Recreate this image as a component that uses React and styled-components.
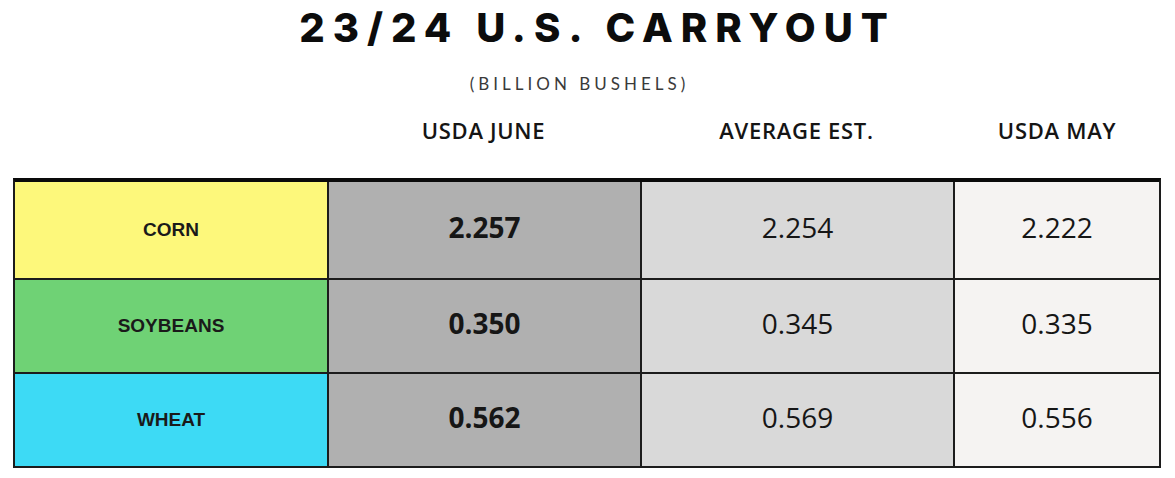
import { Fragment } from 'react';
import styled, { createGlobalStyle } from 'styled-components';

const GlobalStyle = createGlobalStyle`
  body {
    margin: 0;
    background: #ffffff;
    font-family: "Open Sans", "Liberation Sans", sans-serif;
  }
`;

const Page = styled.div`
  width: 1175px;
  height: 478px;
  padding: 0 14px 0 13px;
  box-sizing: border-box;
  overflow: hidden;
`;

const Title = styled.h1`
  margin: 8px 0 0;
  text-align: center;
  font-family: Inter, "Liberation Sans", sans-serif;
  font-weight: 800;
  font-size: 40px;
  line-height: 40px;
  letter-spacing: 8px;
  padding-left: 21px;
  color: #0c0c0c;
`;

const Subtitle = styled.div`
  margin-top: 27px;
  text-align: center;
  font-family: Lato, "Liberation Sans", sans-serif;
  font-size: 17px;
  line-height: 18px;
  letter-spacing: 4px;
  padding-right: 15px;
  color: #3a3a3a;
`;

const cols = '314px 313px 313px 1fr';

const HeaderRow = styled.div`
  display: grid;
  grid-template-columns: ${cols};
  width: 1148px;
  margin-top: 17px;
  height: 40px;
  align-items: center;
`;

const HeaderCell = styled.div`
  text-align: center;
  font-family: "Open Sans", "Liberation Sans", sans-serif;
  font-weight: 600;
  font-size: 22px;
  letter-spacing: 0.7px;
  color: #151515;
`;

const Table = styled.div`
  margin-top: 28px;
  border: 2px solid #1c1c1c;
  border-top: 4px solid #0a0a0a;
  display: grid;
  grid-template-columns: 312px 313px 313px 1fr;
  grid-template-rows: 96px 94px 94px;
  box-sizing: border-box;
  width: 1148px;
`;

const Cell = styled.div`
  display: flex;
  align-items: center;
  justify-content: center;
  box-sizing: border-box;
  background: ${(p) => p.$bg};
  border-left: ${(p) => (p.$first ? 'none' : '2px solid #1c1c1c')};
  border-top: ${(p) => (p.$top ? 'none' : '2px solid #1c1c1c')};
  color: #141414;
`;

const Label = styled.span`
  font-family: "Liberation Sans", Arial, sans-serif;
  font-weight: 700;
  font-size: 19px;
  color: #1a1a1a;
`;

const Value = styled.span`
  margin-bottom: 6px;
  font-family: "Open Sans", "Liberation Sans", sans-serif;
  font-size: 28px;
  font-weight: ${(p) => (p.$bold ? 700 : 400)};
  color: #161616;
`;

const headers = ['', 'USDA JUNE', 'AVERAGE EST.', 'USDA MAY'];

const rows = [
  { label: 'CORN', color: '#fdf87b', values: ['2.257', '2.254', '2.222'] },
  { label: 'SOYBEANS', color: '#6fd275', values: ['0.350', '0.345', '0.335'] },
  { label: 'WHEAT', color: '#3ddaf5', values: ['0.562', '0.569', '0.556'] },
];

const colBg = ['#b0b0b0', '#d9d9d9', '#f5f3f2'];

export default function App() {
  return (
    <>
      <GlobalStyle />
      <Page>
        <Title>23/24 U.S. CARRYOUT</Title>
        <Subtitle>(BILLION BUSHELS)</Subtitle>
        <HeaderRow>
          {headers.map((h, i) => (
            <HeaderCell key={i}>{h}</HeaderCell>
          ))}
        </HeaderRow>
        <Table>
          {rows.map((row, r) => (
            <Fragment key={row.label}>
              <Cell $bg={row.color} $first $top={r === 0}>
                <Label>{row.label}</Label>
              </Cell>
              {row.values.map((v, c) => (
                <Cell key={c} $bg={colBg[c]} $top={r === 0}>
                  <Value $bold={c === 0}>{v}</Value>
                </Cell>
              ))}
            </Fragment>
          ))}
        </Table>
      </Page>
    </>
  );
}
